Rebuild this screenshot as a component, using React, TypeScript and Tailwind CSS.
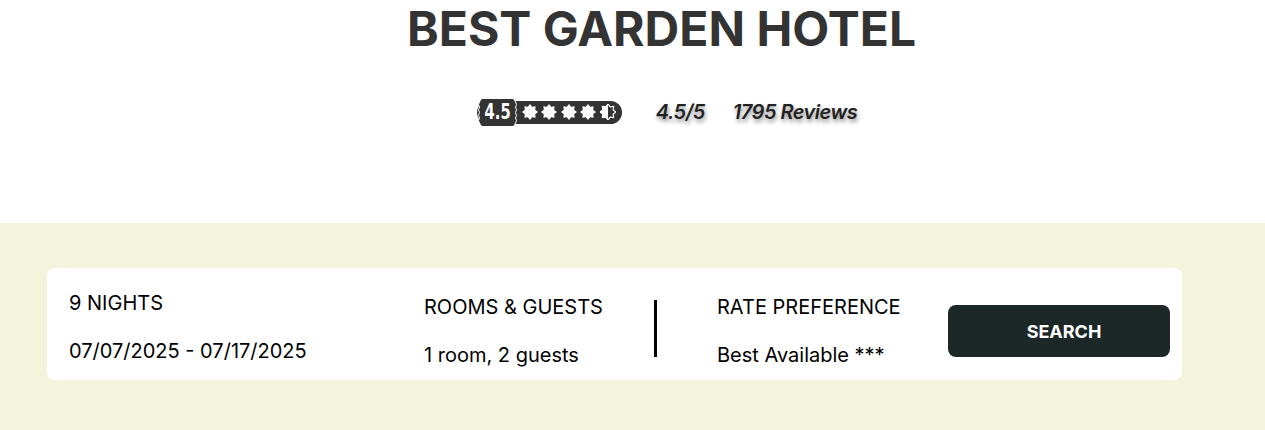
import React from "react";

function Burst({ half = false }: { half?: boolean }) {
    const pts: string[] = [];
    for (let i = 0; i < 16; i++) {
        const a = (Math.PI * 2 * i) / 16 - Math.PI / 2;
        const r = i % 2 === 0 ? 8 : 5.6;
        pts.push(`${(8 + r * Math.cos(a)).toFixed(2)},${(8 + r * Math.sin(a)).toFixed(2)}`);
    }
    return (
        <svg width="16" height="16" viewBox="0 0 16 16">
            {half ? (
                <>
                    <defs>
                        <clipPath id="halfclip">
                            <rect x="0" y="0" width="8" height="16" />
                        </clipPath>
                    </defs>
                    <polygon points={pts.join(" ")} fill="none" stroke="#fff" strokeWidth="1.2" />
                    <polygon points={pts.join(" ")} fill="#fff" clipPath="url(#halfclip)" />
                </>
            ) : (
                <polygon points={pts.join(" ")} fill="#fff" />
            )}
        </svg>
    );
}

function ScoreBadge() {
    return (
        <div className="relative flex items-center justify-center h-[29px] w-[41px] shrink-0">
            <svg className="absolute inset-0" width="41" height="29" viewBox="0 0 41 29">
                <path
                    d="M5 0.5 H36 Q38 2 38.5 4 Q40.5 6.5 38.5 9 Q40.5 11.7 38.5 14.5 Q40.5 17.3 38.5 20 Q40.5 22.5 38.5 25 Q38 27 36 28.5 H5 Q3 27 2.5 25 Q0.5 22.5 2.5 20 Q0.5 17.3 2.5 14.5 Q0.5 11.7 2.5 9 Q0.5 6.5 2.5 4 Q3 2 5 0.5 Z"
                    fill="#333"
                    stroke="#fff"
                    strokeWidth="1"
                />
            </svg>
            <span className="relative inline-block scale-x-[0.7] text-white text-[21px] font-bold leading-none [font-family:'DejaVu_Sans',sans-serif]">
                4.5
            </span>
        </div>
    );
}

export default function App() {
    return (
        <div className="w-[1265px] h-[430px] bg-white [font-family:Inter,'Liberation_Sans',sans-serif] overflow-hidden">
            <div className="h-[223px] flex flex-col items-center pl-[58px]">
                <h1 className="mt-[5px] text-[48px] font-bold leading-[48px] text-[#333]">
                    BEST GARDEN HOTEL
                </h1>
                <div className="mt-[44px] ml-[11px] flex items-center">
                    <div className="flex items-center h-[23px] w-[145px] bg-[#333] rounded-full">
                        <ScoreBadge />
                        <div className="ml-[4px] flex items-center gap-[3.5px]">
                            <Burst />
                            <Burst />
                            <Burst />
                            <Burst />
                            <Burst half />
                        </div>
                    </div>
                    <span className="ml-[34px] text-[20px] font-semibold italic text-[#222] [text-shadow:1px_3px_4px_rgba(0,0,0,0.45)] tracking-[-0.5px]">
                        4.5/5
                    </span>
                    <span className="ml-[28px] text-[20px] font-semibold italic text-[#222] [text-shadow:1px_3px_4px_rgba(0,0,0,0.45)] tracking-[-0.5px]">
                        1795 Reviews
                    </span>
                </div>
            </div>
            <div className="h-[207px] bg-[#f4f4dc] pt-[45px] px-[47px]">
                <div className="w-[1135px] h-[112px] bg-white rounded-[8px] flex items-start text-[20px] text-black">
                    <div className="ml-[22px] w-[355px] flex flex-col gap-[24px] mt-[23px]">
                        <div className="leading-[24px]">9 NIGHTS</div>
                        <div className="leading-[24px]">07/07/2025 - 07/17/2025</div>
                    </div>
                    <div className="w-[230px] flex flex-col gap-[24px] mt-[27px]">
                        <div className="leading-[24px]">ROOMS &amp; GUESTS</div>
                        <div className="leading-[24px]">1 room, 2 guests</div>
                    </div>
                    <div className="mt-[32px] w-[3px] h-[57px] bg-black" />
                    <div className="ml-[60px] w-[231px] flex flex-col gap-[24px] mt-[27px]">
                        <div className="leading-[24px]">RATE PREFERENCE</div>
                        <div className="leading-[24px]">Best Available ***</div>
                    </div>
                    <button className="mt-[37px] w-[222px] h-[52px] pl-[10px] rounded-[8px] bg-[#1c2727] text-white text-[18px] font-bold">
                        SEARCH
                    </button>
                </div>
            </div>
        </div>
    );
}
